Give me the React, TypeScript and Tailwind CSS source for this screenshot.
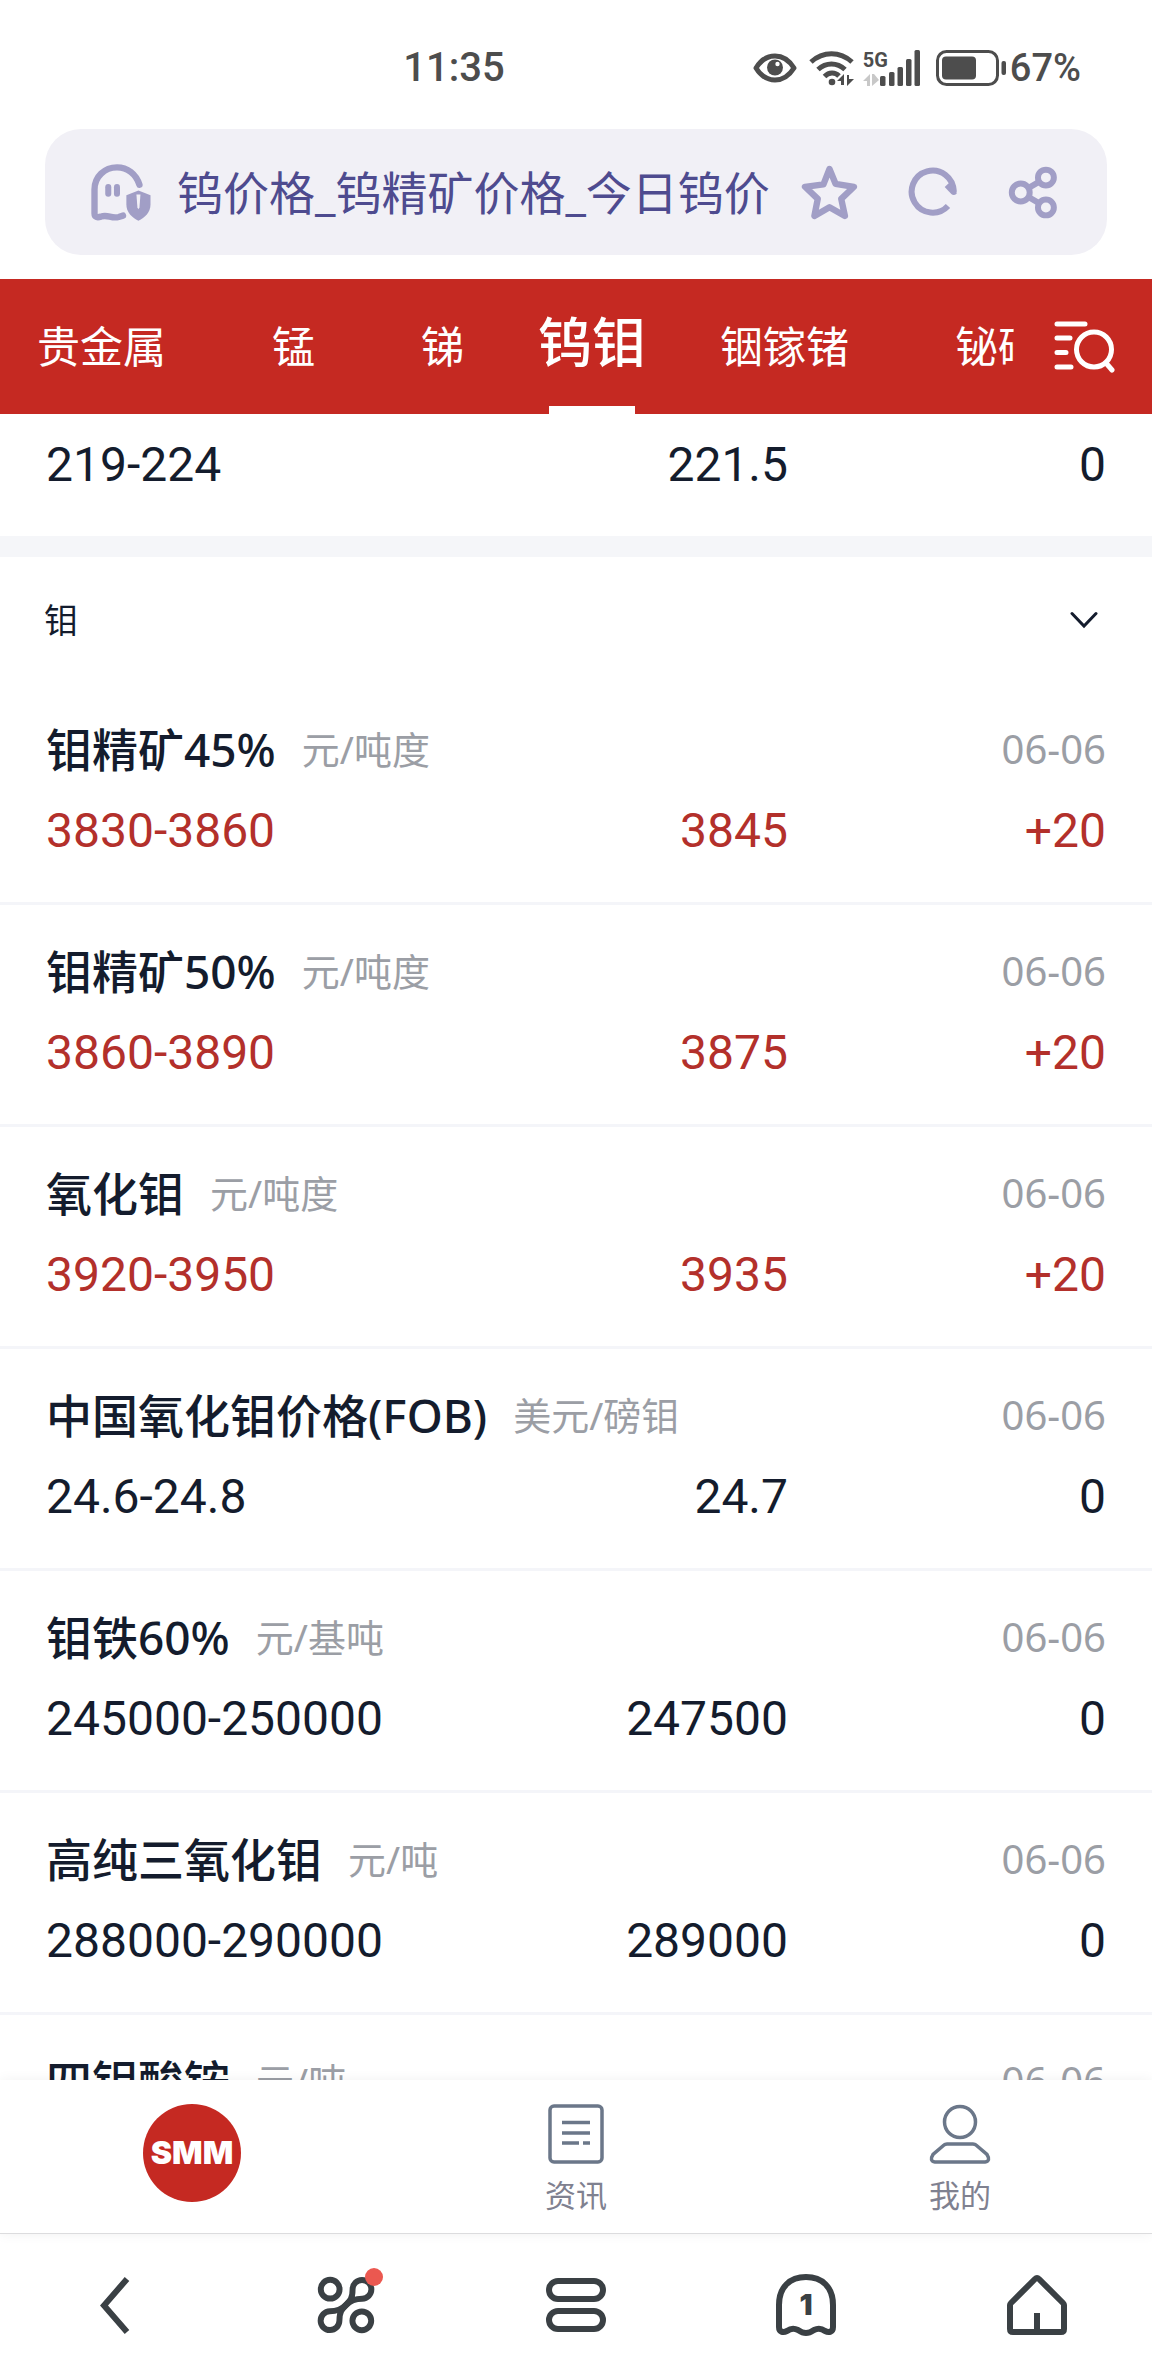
import { useState } from 'react';

type Price = {
  range: string;
  average: string;
  change: string;
};

type Quote = {
  name: string;
  unit: string;
  date: string;
  price?: Price;
};

const tabs = ['贵金属', '锰', '锑', '钨钼', '铟镓锗', '铋硒碲'];

const quotes: Quote[] = [
  { name: '钼精矿45%', unit: '元/吨度', date: '06-06', price: { range: '3830-3860', average: '3845', change: '+20' } },
  { name: '钼精矿50%', unit: '元/吨度', date: '06-06', price: { range: '3860-3890', average: '3875', change: '+20' } },
  { name: '氧化钼', unit: '元/吨度', date: '06-06', price: { range: '3920-3950', average: '3935', change: '+20' } },
  { name: '中国氧化钼价格(FOB)', unit: '美元/磅钼', date: '06-06', price: { range: '24.6-24.8', average: '24.7', change: '0' } },
  { name: '钼铁60%', unit: '元/基吨', date: '06-06', price: { range: '245000-250000', average: '247500', change: '0' } },
  { name: '高纯三氧化钼', unit: '元/吨', date: '06-06', price: { range: '288000-290000', average: '289000', change: '0' } },
  { name: '四钼酸铵', unit: '元/吨', date: '06-06' },
];

const StatusBar = () => (
  <div className="flex items-center justify-between pt-[45px] pb-[38px] pl-[35%] pr-[71px] font-['Roboto'] leading-[46px] font-medium text-[#4d4d4d]">
    <span className="text-[40px]">11:35</span>
    <div className="flex items-center">
      <svg className="w-11 h-[30px]" viewBox="0 0 44 30" fill="none">
        <path d="M3 15C8 7 14 3 22 3s14 4 19 12c-5 8-11 12-19 12S8 23 3 15z" stroke="currentColor" strokeWidth="5" strokeLinejoin="round" />
        <circle cx="22" cy="14.5" r="8" fill="currentColor" />
        <circle cx="24.5" cy="11" r="2.2" fill="#fff" />
      </svg>
      <svg className="ml-3 w-[46px] h-9" viewBox="0 0 46 36" fill="none" stroke="currentColor" strokeWidth="5">
        <path d="M2 12C14 1 31 1 43 12" />
        <path d="M9 19.5C17 12 28 12 36 19.5" />
        <path d="M15.5 26.5C20 22 26 22 30 26" />
        <circle cx="23" cy="32" r="3.3" fill="currentColor" stroke="none" />
        <path d="M35 24v11h-3v-4h-4zM38 36V25h2v4h5z" fill="currentColor" stroke="none" />
      </svg>
      <div className="ml-2 flex h-9 items-end">
        <div className="flex h-9 flex-col justify-between">
          <span className="text-[20px] leading-5 font-bold">5G</span>
          <svg className="w-4 h-3" viewBox="0 0 16 12" fill="#c8c8c8">
            <path d="M7 0v12H4V7H0zM9 12V0h2l5 6z" />
          </svg>
        </div>
        <svg className="-ml-2 w-10 h-9" viewBox="0 0 40 36" fill="currentColor">
          <rect x="0" y="26" width="5.5" height="10" rx="1.5" />
          <rect x="9" y="22" width="5.5" height="14" rx="1.5" />
          <rect x="17.5" y="17" width="5.5" height="19" rx="1.5" />
          <rect x="26" y="9" width="5.5" height="27" rx="1.5" />
          <rect x="34.5" y="0" width="5.5" height="36" rx="1.5" />
        </svg>
      </div>
      <svg className="ml-4 w-[70px] h-9" viewBox="0 0 70 36" fill="none">
        <rect x="1.5" y="1.5" width="60" height="33" rx="9" stroke="currentColor" strokeWidth="3" />
        <rect x="6" y="6.5" width="34" height="23" rx="4" fill="currentColor" />
        <rect x="65.5" y="11" width="4.5" height="14" rx="2" fill="currentColor" />
      </svg>
      <span className="ml-1 text-[38px]">67%</span>
    </div>
  </div>
);

const AddressBar = () => (
  <div className="mx-[45px] mb-6 flex items-center rounded-[36px] bg-[#f1f0f6] py-[33px] pl-[46px] pr-[49px] text-[#a19ec6]">
    <svg className="h-[57px] w-[60px] shrink-0" viewBox="0 0 178 170" fill="none" aria-hidden="true">
      <path d="M144 62C134 30 108 10 77 10C40 10 10 38 10 76V148C10 160 20 160 29 157C49 149 60 164 82 158L95 154" stroke="currentColor" strokeWidth="19" strokeLinecap="round" />
      <rect x="42" y="60" width="18" height="38" rx="9" fill="currentColor" />
      <rect x="68" y="60" width="18" height="38" rx="9" fill="currentColor" />
      <path d="M141 79L177 93V120C177 145 160 160 141 169C122 160 105 145 105 120V93Z" fill="currentColor" />
      <path d="M135 91H147L144 130L141 135L138 130Z" fill="#f1f0f6" />
    </svg>
    <span className="ml-[26px] flex-1 overflow-hidden whitespace-nowrap text-[46px] leading-[60px] text-[#4e4b8f]">
      钨价格_钨精矿价格_今日钨价
    </span>
    <div className="flex shrink-0 items-center gap-[50px]">
      <button type="button" aria-label="收藏">
        <svg className="h-[55px] w-[57px]" viewBox="0 0 170 164" fill="none">
          <path d="M85 12L103 56L158 65L120 101L131 152L85 126L40 152L50 101L12 65L67 58Z" stroke="currentColor" strokeWidth="19" strokeLinejoin="round" />
        </svg>
      </button>
      <button type="button" aria-label="刷新">
        <svg className="size-[50px]" viewBox="0 0 150 150" fill="none">
          <path d="M120 117A63 63 0 1 1 137 74" stroke="currentColor" strokeWidth="18" />
          <path d="M110 60L130 81Q137 87 146 80L144 58L127 44Z" fill="currentColor" />
        </svg>
      </button>
      <button type="button" aria-label="分享">
        <svg className="h-[53px] w-[50px]" viewBox="0 0 150 160" fill="none" stroke="currentColor" strokeWidth="18">
          <circle cx="38" cy="80" r="27" />
          <circle cx="114" cy="35" r="24" />
          <circle cx="114" cy="125" r="24" />
          <path d="M62 66L93 48M62 94L93 112" />
        </svg>
      </button>
    </div>
  </div>
);

const CategoryTabs = () => {
  const [active, setActive] = useState('钨钼');

  return (
    <div className="flex items-center bg-[#c52922] pr-9 text-white">
      <nav className="min-w-0 flex-1 overflow-hidden">
        <div className="-ml-4 flex w-max">
          {tabs.map((tab) => (
            <button
              key={tab}
              type="button"
              onClick={() => setActive(tab)}
              className={
                tab === active
                  ? 'relative px-[21px] pb-2 text-[54px] leading-[127px] font-medium'
                  : 'px-[53px] text-[43px] leading-[135px]'
              }
            >
              {tab}
              {tab === active && <span className="absolute inset-x-8 bottom-0 h-2 bg-white" />}
            </button>
          ))}
        </div>
      </nav>
      <button type="button" aria-label="搜索分类" className="ml-10 shrink-0">
        <svg className="h-[52px] w-[62px]" viewBox="0 0 62 52" fill="none" stroke="currentColor" strokeWidth="5" strokeLinecap="round">
          <path d="M3 3H31M3 17H16M3 31.5H12M3 46H17" />
          <circle cx="40" cy="28.5" r="17.5" />
          <path d="M52 42L58 49" />
        </svg>
      </button>
    </div>
  );
};

const PriceLine = ({ range, average, change }: Price) => (
  <div
    className={`grid grid-cols-[7fr_3fr] font-['Roboto'] text-[48px] leading-[60px] ${
      change.startsWith('+') ? 'text-[#b3302b]' : 'text-[#141c2d]'
    }`}
  >
    <div className="flex justify-between">
      <span>{range}</span>
      <span>{average}</span>
    </div>
    <span className="text-right">{change}</span>
  </div>
);

const QuoteRow = ({ quote }: { quote: Quote }) => (
  <li className="border-b-[3px] border-[#f4f5f9] px-[46px] pt-9 pb-[41px]">
    <div className="mb-[22px] flex items-center leading-[60px]">
      <h3 className="text-[46px] font-medium text-[#141c2d]">{quote.name}</h3>
      <span className="ml-[26px] text-[38px] text-[#9b9ea5]">{quote.unit}</span>
      <time className="ml-auto text-[40px] text-[#9b9ea5]">{quote.date}</time>
    </div>
    {quote.price && <PriceLine {...quote.price} />}
  </li>
);

const SiteNav = () => (
  <nav className="relative flex border-b border-[#dcdcde] bg-white pt-6 pb-[18px] text-[31px] leading-10 text-[#7f8190] shadow-[0_0_12px_rgba(0,0,0,0.06)]">
    <a href="#home" className="flex flex-1 justify-center">
      <span className="flex size-[98px] items-center justify-center rounded-full bg-[#c52922] font-['Inter'] text-[32px] font-black text-white">
        SMM
      </span>
    </a>
    <a href="#news" className="flex flex-1 flex-col items-center gap-[11px]">
      <svg className="h-[60px] w-14" viewBox="0 0 56 60" fill="none" stroke="#6b7789" strokeWidth="3.5">
        <rect x="2" y="2" width="52" height="56" rx="4" />
        <path d="M14 18.5H42M14 29H42M14 39H31M35 39H42" />
      </svg>
      <span>资讯</span>
    </a>
    <a href="#mine" className="flex flex-1 flex-col items-center gap-[11px]">
      <svg className="h-[60px] w-[62px]" viewBox="0 0 62 60" fill="none" stroke="#6b7789" strokeWidth="3.5">
        <circle cx="31" cy="18" r="15.5" />
        <path d="M18 40H44Q46 40 47 41L58 50.5Q62 57 56 58H6Q0 57 4 50.5L15 41Q16 40 18 40Z" />
      </svg>
      <span>我的</span>
    </a>
  </nav>
);

const BrowserBar = () => (
  <div className="flex items-center bg-white py-10 text-[#3a4044]">
    <button type="button" aria-label="返回" className="flex flex-1 justify-center">
      <svg className="h-[57px] w-[30px]" viewBox="0 0 30 57" fill="none" stroke="currentColor" strokeWidth="6">
        <path d="M27 2L4 28.5L27 55" />
      </svg>
    </button>
    <button type="button" aria-label="应用" className="flex flex-1 justify-center">
      <span className="relative">
        <svg className="size-[58px]" viewBox="0 0 176 176" fill="none" stroke="currentColor" strokeWidth="18">
          <circle cx="40" cy="40" r="28.5" />
          <circle cx="136" cy="136" r="28.5" />
          <path d="M108 40A28.5 28.5 0 1 1 137 69C112 69 100 76 88 88C76 100 68 108 68 136A28.5 28.5 0 1 1 39 107C64 107 76 100 88 88C100 76 108 68 108 40Z" />
          <path d="M72 104L104 72" strokeWidth="20" />
        </svg>
        <span className="absolute -top-2 -right-2 size-[18px] rounded-full bg-[#eb5850]" />
      </span>
    </button>
    <button type="button" aria-label="菜单" className="flex flex-1 justify-center">
      <svg className="h-[54px] w-[60px]" viewBox="0 0 60 54" fill="none" stroke="currentColor" strokeWidth="6">
        <rect x="3" y="3" width="54" height="18" rx="9" />
        <rect x="3" y="33" width="54" height="18" rx="9" />
      </svg>
    </button>
    <button type="button" aria-label="标签页" className="flex flex-1 justify-center">
      <svg className="h-[62px] w-[60px]" viewBox="0 0 60 62" fill="none">
        <path d="M3 31C3 13 14 3 30 3S57 13 57 31V53C57 58 53 59 49 57C45 54 42 54 38 56C35 58 33 59 30 59S25 58 22 56C18 54 15 54 11 57C7 59 3 58 3 53Z" stroke="currentColor" strokeWidth="6" />
        <text x="30" y="41" textAnchor="middle" fill="currentColor" className="font-['Inter'] text-[29px] font-black">
          1
        </text>
      </svg>
    </button>
    <button type="button" aria-label="主页" className="flex flex-1 justify-center">
      <svg className="size-[60px]" viewBox="0 0 60 60" fill="none" stroke="currentColor" strokeWidth="6">
        <path d="M3 30Q3 29 4 28L28 4Q30 2 32 4L56 28Q57 29 57 30V54Q57 57 54 57H6Q3 57 3 54Z" />
        <path d="M30 38V57" />
      </svg>
    </button>
  </div>
);

export default function App() {
  const [open, setOpen] = useState(true);

  return (
    <div className="flex h-screen flex-col overflow-hidden bg-white font-['Noto_Sans','Noto_Sans_CJK_SC',sans-serif]">
      <StatusBar />
      <AddressBar />
      <CategoryTabs />

      <main className="min-h-0 flex-1 overflow-y-auto [scrollbar-width:none]">
        <section className="border-b-[21px] border-[#f5f6f9] px-[46px] pt-[21px] pb-[41px]">
          <PriceLine range="219-224" average="221.5" change="0" />
        </section>

        <section>
          <button
            type="button"
            onClick={() => setOpen(!open)}
            className="flex w-full items-center justify-between py-[33px] pl-11 pr-[54px] text-[34px] leading-[60px] text-[#141c2d]"
          >
            钼
            <svg className="h-[18px] w-7" viewBox="0 0 28 18" fill="none" stroke="currentColor" strokeWidth="3" strokeLinecap="round">
              <path d="M2 2.5L14 15L26 2.5" />
            </svg>
          </button>
          {open && (
            <ul>
              {quotes.map((quote) => (
                <QuoteRow key={quote.name} quote={quote} />
              ))}
            </ul>
          )}
        </section>
      </main>

      <SiteNav />
      <BrowserBar />
    </div>
  );
}
